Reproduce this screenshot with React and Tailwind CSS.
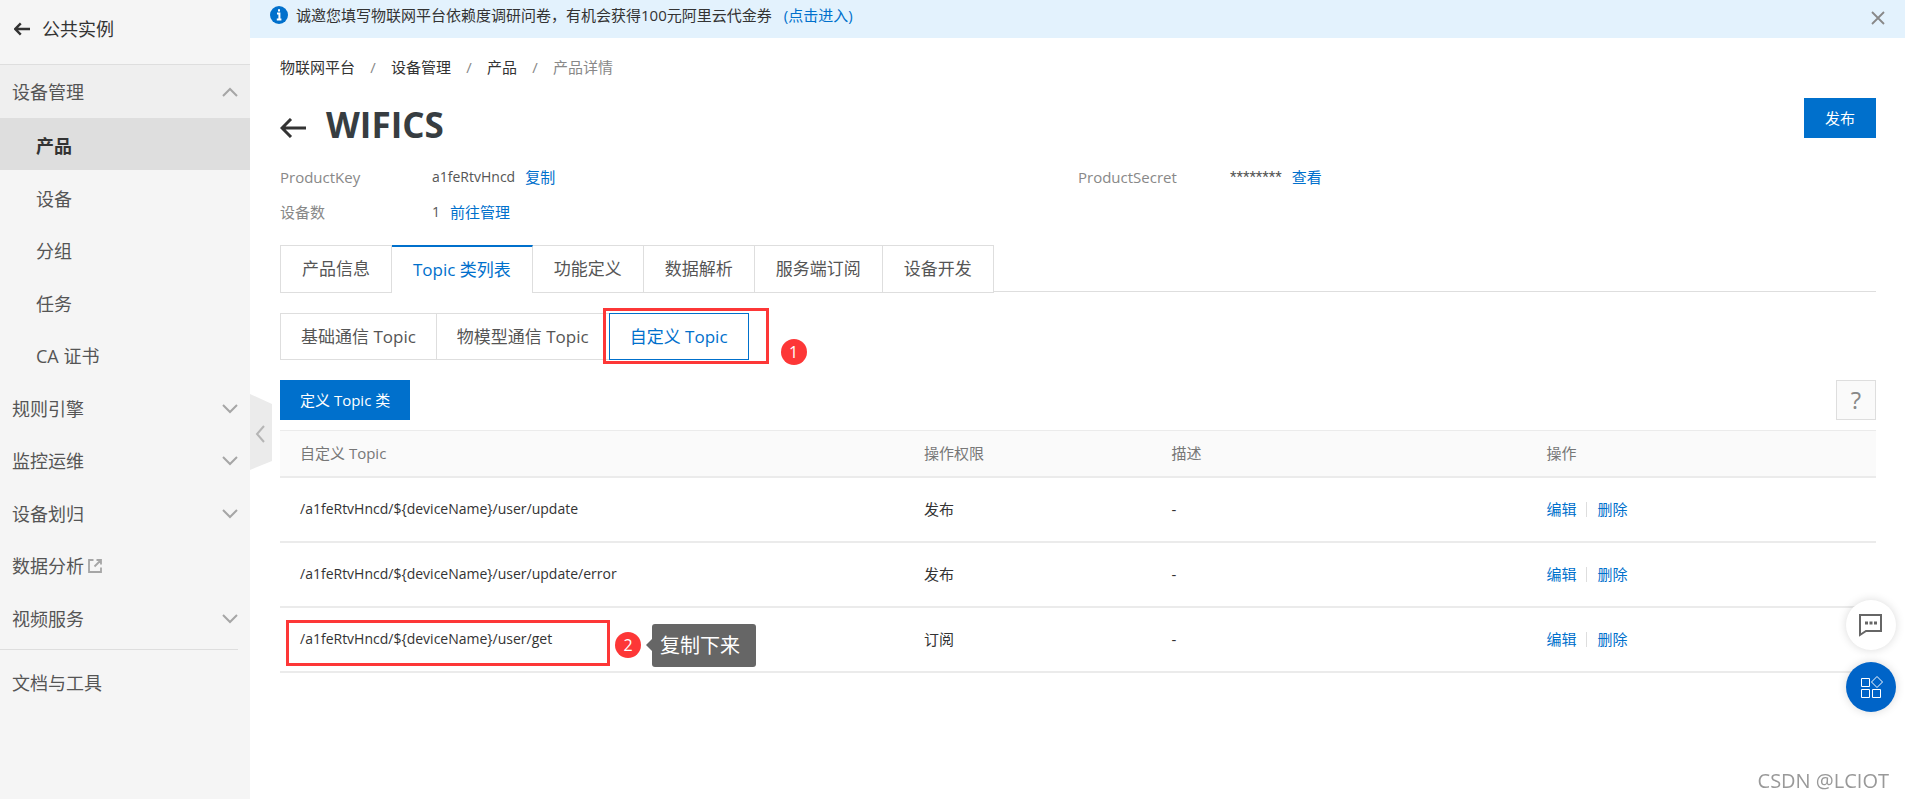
import React, { useState } from 'react';
import clsx from 'clsx';

const DEVICE_MENU = ['产品', '设备', '分组', '任务', 'CA 证书'];

const MENU_GROUPS = [
  { label: '规则引擎', expandable: true },
  { label: '监控运维', expandable: true },
  { label: '设备划归', expandable: true },
  { label: '数据分析', external: true },
  { label: '视频服务', expandable: true },
];

const TABS = ['产品信息', 'Topic 类列表', '功能定义', '数据解析', '服务端订阅', '设备开发'];

const TOPIC_TABS = ['基础通信 Topic', '物模型通信 Topic', '自定义 Topic'];

const TOPICS = [
  { path: '/a1feRtvHncd/${deviceName}/user/update', permission: '发布', desc: '-' },
  { path: '/a1feRtvHncd/${deviceName}/user/update/error', permission: '发布', desc: '-' },
  { path: '/a1feRtvHncd/${deviceName}/user/get', permission: '订阅', desc: '-', marked: true },
];

function Chevron({ up }) {
  return (
    <svg className="w-4 h-2.5" viewBox="0 0 16 10" fill="none" stroke="#a6a6a6" strokeWidth="2">
      <path d={up ? 'M1 9L8 2L15 9' : 'M1 1L8 8L15 1'} />
    </svg>
  );
}

function ArrowLeft({ className, strokeWidth }) {
  return (
    <svg className={className} viewBox="0 0 26 20" fill="none" stroke="#333" strokeWidth={strokeWidth}>
      <path d="M11 1L2 10L11 19M2 10H26" />
    </svg>
  );
}

function Badge({ className, children }) {
  return (
    <span
      className={clsx(
        'absolute flex items-center justify-center size-[26px] rounded-full bg-[#fd3737] text-white text-base leading-6',
        className
      )}
    >
      {children}
    </span>
  );
}

function Sidebar() {
  return (
    <aside className="relative w-[250px] shrink-0 bg-[#f5f5f5] text-[#555] text-lg leading-6">
      <a href="#" className="flex items-center gap-3 h-[65px] pl-3.5 pb-1.5 border-b border-[#dedede] text-[#333]">
        <ArrowLeft className="w-4 h-3.5" strokeWidth="4" />
        公共实例
      </a>
      <nav>
        <button type="button" className="flex items-center justify-between w-full h-[53px] px-3 bg-[#efefef]">
          设备管理
          <Chevron up />
        </button>
        <ul>
          {DEVICE_MENU.map((item, i) => (
            <li key={item} className="h-[52px] even:h-[53px]">
              <a
                href="#"
                className={clsx('flex items-center h-full pl-9 pt-1', i === 0 && 'bg-[#dedede] text-[#333] font-bold')}
              >
                {item}
              </a>
            </li>
          ))}
        </ul>
        <ul>
          {MENU_GROUPS.map((group) => (
            <li key={group.label} className="h-[52px] odd:h-[53px]">
              <button type="button" className="flex items-center w-full h-full px-3 pt-1">
                {group.label}
                {group.external && (
                  <svg className="size-3.5 ml-1" viewBox="0 0 14 14" fill="none" stroke="#a6a6a6" strokeWidth="1.8">
                    <path d="M5.5 1H1V13H13V8.5M8.5 1H13V5.5M13 1L6.5 7.5" />
                  </svg>
                )}
                {group.expandable && (
                  <span className="ml-auto">
                    <Chevron />
                  </span>
                )}
              </button>
            </li>
          ))}
        </ul>
        <div className="mr-3 mt-1.5 border-t border-[#dedede]" />
        <a href="#" className="flex items-center h-[66px] pl-3">
          文档与工具
        </a>
      </nav>
      <button type="button" aria-label="收起菜单" className="absolute left-full top-[394px] w-[22px] h-[76px]">
        <svg viewBox="0 0 22 76" fill="none">
          <path d="M0 0L22 10V67L0 76Z" fill="#ebebeb" />
          <path d="M14 32L7 40L14 48" stroke="#b5b5b5" strokeWidth="2" />
        </svg>
      </button>
    </aside>
  );
}

function Banner({ onClose }) {
  return (
    <div className="flex items-center h-[38px] px-5 pb-2 bg-[#e3f2fd]">
      <svg className="size-[18px] shrink-0" viewBox="0 0 18 18">
        <circle cx="9" cy="9" r="9" fill="#0070cc" />
        <path d="M9 3.2V5.6M7 7.6H9.4V13.4M6.8 13.4H11.4" stroke="#fff" strokeWidth="2" fill="none" />
      </svg>
      <p className="ml-2">诚邀您填写物联网平台依赖度调研问卷，有机会获得100元阿里云代金券</p>
      <a href="#" className="ml-3 text-[#0070cc]">
        (点击进入)
      </a>
      <button type="button" aria-label="关闭" onClick={onClose} className="ml-auto mt-1.5">
        <svg className="size-3.5" viewBox="0 0 14 14" stroke="#888" strokeWidth="1.8">
          <path d="M1 1L13 13M13 1L1 13" />
        </svg>
      </button>
    </div>
  );
}

function Breadcrumb() {
  const parents = ['物联网平台', '设备管理', '产品'];
  return (
    <nav className="flex items-center leading-6">
      {parents.map((item) => (
        <React.Fragment key={item}>
          <a href="#">{item}</a>
          <span className="w-9 text-center text-[#888]">/</span>
        </React.Fragment>
      ))}
      <span className="text-[#888]">产品详情</span>
    </nav>
  );
}

function InfoItem({ label, value, action, masked }) {
  return (
    <div className="flex items-center h-[35px]">
      <dt className="w-[152px] text-[#888]">{label}</dt>
      <dd className="flex gap-2.5 text-[#555]">
        <span className={masked ? 'font-[Roboto,sans-serif]' : 'text-sm leading-6'}>{value}</span>
        <a href="#" className="text-[#0070cc]">
          {action}
        </a>
      </dd>
    </div>
  );
}

function Tabs({ active, onChange }) {
  return (
    <div className="flex items-end mt-4 text-[17px] leading-6 text-[#555]">
      {TABS.map((tab) => (
        <button
          key={tab}
          type="button"
          onClick={() => onChange(tab)}
          className={clsx(
            'h-12 px-[21px] border-r border-[#dedede] first:border-l',
            tab === active ? 'border-t-2 border-t-[#0070cc] text-[#0070cc]' : 'border-y'
          )}
        >
          {tab}
        </button>
      ))}
      <div className="flex-1 mb-px border-b border-[#dedede]" />
    </div>
  );
}

function TopicTabs({ active, onChange }) {
  return (
    <div className="flex mt-5 text-[17px] leading-6 text-[#555]">
      {TOPIC_TABS.map((tab) => (
        <div key={tab} className="relative">
          <button
            type="button"
            onClick={() => onChange(tab)}
            className={clsx(
              'h-[47px] px-5 border',
              tab === active ? 'border-[#0070cc] text-[#0070cc]' : 'border-[#dedede] border-r-0'
            )}
          >
            {tab}
          </button>
          {tab === '自定义 Topic' && (
            <>
              <div className="absolute -left-1.5 -right-5 -top-[5px] -bottom-1 border-3 border-[#fd3737] pointer-events-none" />
              <Badge className="-right-[58px] top-[26px]">1</Badge>
            </>
          )}
        </div>
      ))}
    </div>
  );
}

function TopicTable() {
  return (
    <table className="w-full table-fixed mt-2.5 text-left">
      <thead>
        <tr className="h-[46px] bg-[#fafafa] border-t border-b-2 border-t-[#ebebeb] border-b-[#ebebeb] text-[#777]">
          <th className="w-[39.1%] px-5 font-normal">自定义 Topic</th>
          <th className="w-[15.5%] px-5 font-normal">操作权限</th>
          <th className="w-[23.5%] px-5 font-normal">描述</th>
          <th className="px-5 font-normal">操作</th>
        </tr>
      </thead>
      <tbody>
        {TOPICS.map((topic) => (
          <tr key={topic.path} className="h-[65px] border-b-2 border-[#ebebeb]">
            <td className="relative px-5 text-sm leading-6">
              {topic.path}
              {topic.marked && (
                <>
                  <div className="absolute left-1.5 top-3 w-[324px] h-[46px] border-3 border-[#fd3737] pointer-events-none" />
                  <Badge className="left-[335px] top-6">2</Badge>
                  <div className="absolute left-[366px] top-4 flex items-center">
                    <span className="border-y-6 border-r-6 border-y-transparent border-r-[#666]" />
                    <span className="w-[104px] h-[43px] px-2 rounded-[3px] bg-[#666] text-white text-xl leading-[43px]">
                      复制下来
                    </span>
                  </div>
                </>
              )}
            </td>
            <td className="px-5">{topic.permission}</td>
            <td className="px-5">{topic.desc}</td>
            <td className="px-5">
              <div className="flex items-center text-[#0070cc]">
                <a href="#">编辑</a>
                <span className="w-px h-[15px] mx-2.5 bg-[#dedede]" />
                <a href="#">删除</a>
              </div>
            </td>
          </tr>
        ))}
      </tbody>
    </table>
  );
}

function FloatingActions() {
  return (
    <div className="fixed right-[9px] top-[600px] flex flex-col gap-3">
      <button
        type="button"
        aria-label="反馈"
        className="flex items-center justify-center size-[50px] rounded-full bg-white shadow-[0_0_10px_rgba(0,0,0,0.15)]"
      >
        <svg className="size-6" viewBox="0 0 24 24" fill="none" stroke="#666" strokeWidth="2">
          <path d="M1 2H22V18H7L1 22Z" />
          <path d="M6 10H9M10.5 10H13.5M15 10H18" strokeWidth="3" />
        </svg>
      </button>
      <button
        type="button"
        aria-label="应用"
        className="flex items-center justify-center size-[50px] rounded-full bg-[#0064c8] shadow-[0_0_10px_rgba(0,0,0,0.15)]"
      >
        <svg className="size-6" viewBox="0 0 24 24" fill="none" stroke="#fff">
          <path d="M2.5 3.5H10.5V11.5H2.5ZM2.5 14.5H10.5V22.5H2.5ZM13.5 14.5H21.5V22.5H13.5Z" />
          <path d="M18 1.5L23.5 7L18 12.5L12.5 7Z" />
        </svg>
      </button>
    </div>
  );
}

export default function App() {
  const [showBanner, setShowBanner] = useState(true);
  const [tab, setTab] = useState('Topic 类列表');
  const [topicTab, setTopicTab] = useState('自定义 Topic');

  return (
    <div className="flex min-h-screen bg-white text-[#333] text-[15px] leading-6 font-['Open_Sans','Noto_Sans_CJK_SC',sans-serif]">
      <Sidebar />
      <div className="flex-1 min-w-0">
        {showBanner && <Banner onClose={() => setShowBanner(false)} />}
        <main className="pl-[30px] pr-[29px] pt-[17px]">
          <Breadcrumb />
          <header className="flex items-start justify-between mt-[19px]">
            <div className="flex items-center gap-5 h-[54px]">
              <a href="#" aria-label="返回" className="pt-1.5">
                <ArrowLeft className="w-[26px] h-5" strokeWidth="3" />
              </a>
              <h1 className="text-[35px] leading-[54px] font-bold text-[#373d41]">WIFICS</h1>
            </div>
            <button type="button" className="w-[72px] h-10 bg-[#0070cc] text-white">
              发布
            </button>
          </header>
          <dl className="grid grid-cols-2 mt-[7px]">
            <InfoItem label="ProductKey" value="a1feRtvHncd" action="复制" />
            <InfoItem label="ProductSecret" value="********" action="查看" masked />
            <InfoItem label="设备数" value="1" action="前往管理" />
          </dl>
          <Tabs active={tab} onChange={setTab} />
          <TopicTabs active={topicTab} onChange={setTopicTab} />
          <div className="flex justify-between mt-5">
            <button type="button" className="h-10 px-5 bg-[#0070cc] text-white">
              定义 Topic 类
            </button>
            <button
              type="button"
              aria-label="帮助"
              className="size-10 border border-[#dedede] bg-[#fafafa] text-2xl text-[#888]"
            >
              ?
            </button>
          </div>
          <TopicTable />
        </main>
      </div>
      <FloatingActions />
      <p className="fixed right-4 bottom-1 text-xl leading-7 text-[#999]">CSDN @LCIOT</p>
    </div>
  );
}
